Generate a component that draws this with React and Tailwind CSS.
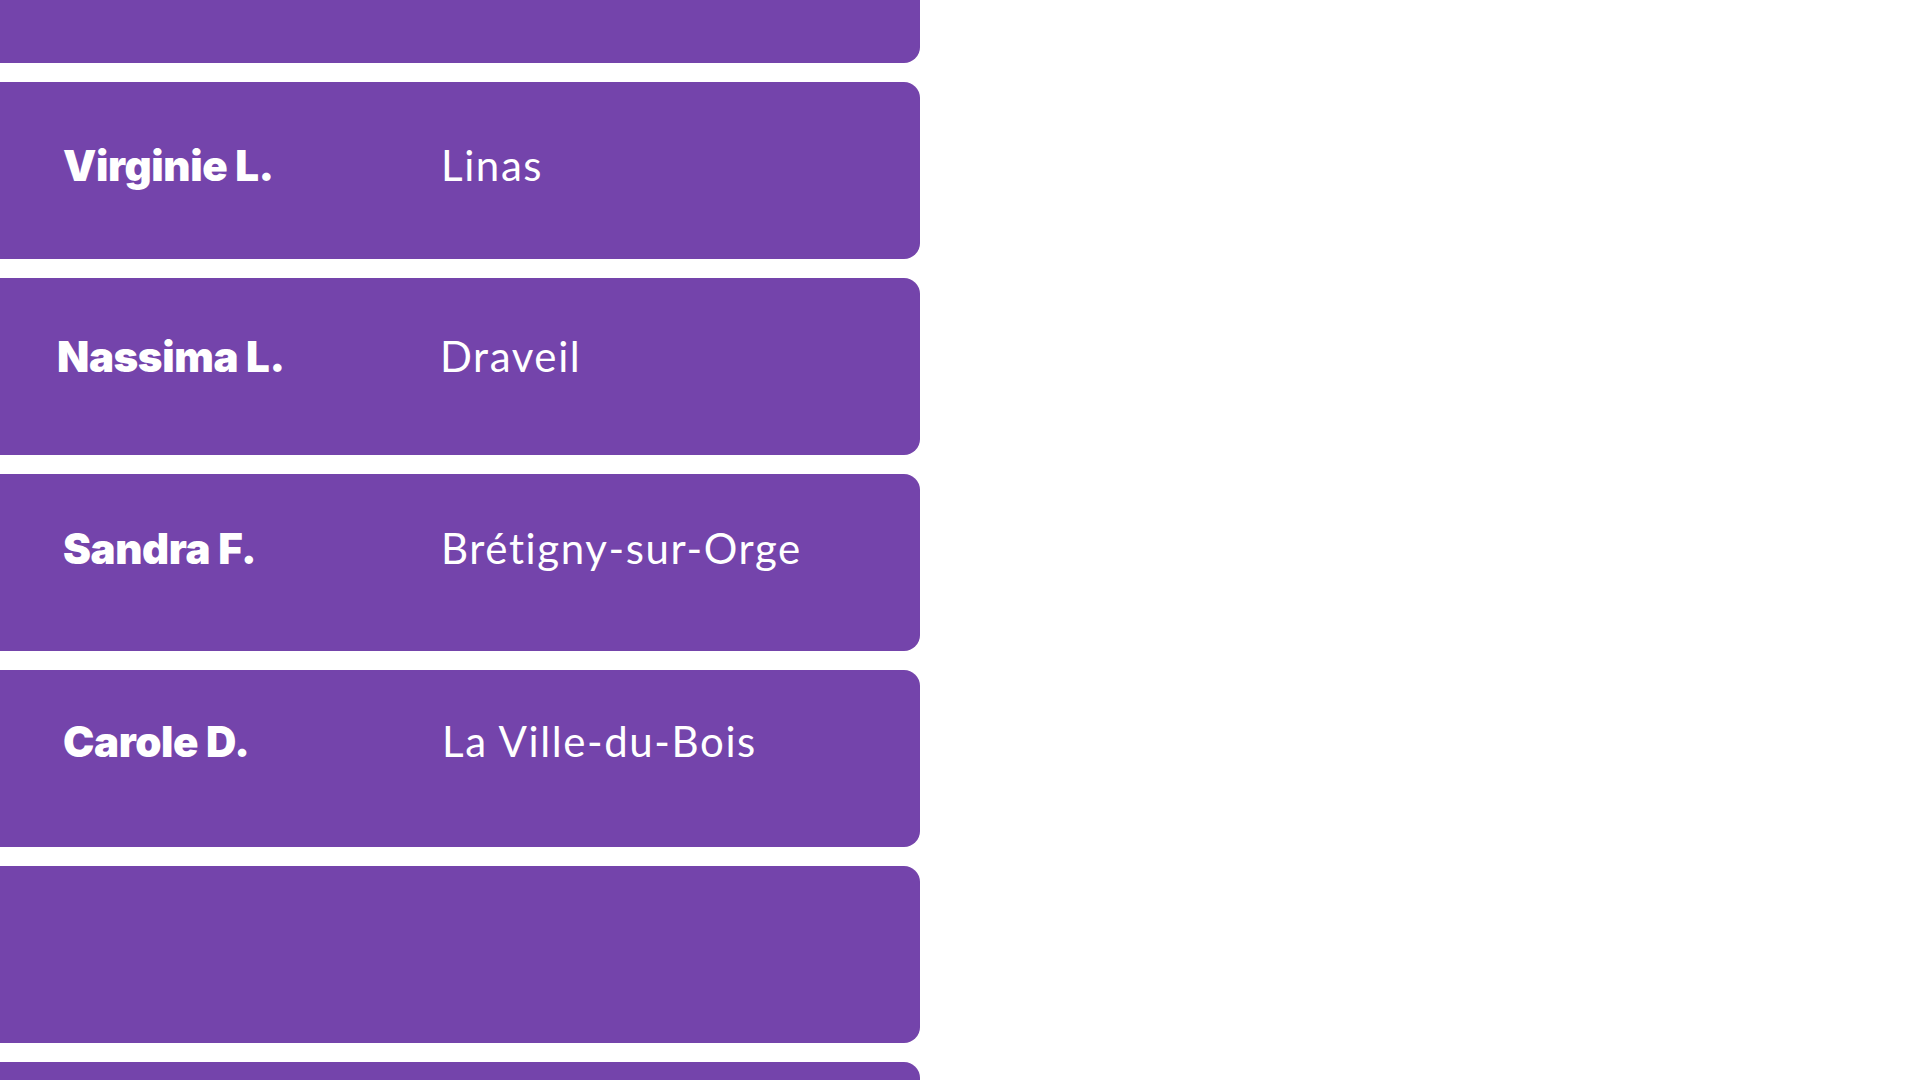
export default function App() {
  const rows = [
    { name: "", city: "", pt: "pt-[62px]", pl: "pl-[63px]", w: "w-[378px]" },
    { name: "Virginie L.", city: "Linas", pt: "pt-[62px]", pl: "pl-[63px]", w: "w-[378px]" },
    { name: "Nassima L.", city: "Draveil", pt: "pt-[57px]", pl: "pl-[57px]", w: "w-[383px]" },
    { name: "Sandra F.", city: "Brétigny-sur-Orge", pt: "pt-[53px]", pl: "pl-[63px]", w: "w-[378px]" },
    { name: "Carole D.", city: "La Ville-du-Bois", pt: "pt-[50px]", pl: "pl-[63px]", w: "w-[379px]" },
    { name: "", city: "", pt: "pt-[46px]", pl: "pl-[63px]", w: "w-[379px]" },
    { name: "", city: "", pt: "pt-[46px]", pl: "pl-[63px]", w: "w-[379px]" },
  ];
  return (
    <div className="w-[1920px] h-[1080px] overflow-hidden bg-white" style={{ fontFamily: "Lato, 'Open Sans', sans-serif" }}>
      <div className="flex flex-col gap-[19px] w-[920px] mt-[-114px]">
        {rows.map((r, i) => (
          <div
            key={i}
            className={`h-[177px] shrink-0 rounded-r-[16px] bg-[#7444ab] flex items-start text-white ${r.pt} ${r.pl}`}
          >
            <div className={`${r.w} shrink-0 font-['Inter',sans-serif] text-[42px] leading-none font-black tracking-[-0.4px] pt-[1px]`}>{r.name}</div>
            <div className="text-[42px] leading-none font-normal tracking-[1.6px]">{r.city}</div>
          </div>
        ))}
      </div>
    </div>
  );
}
